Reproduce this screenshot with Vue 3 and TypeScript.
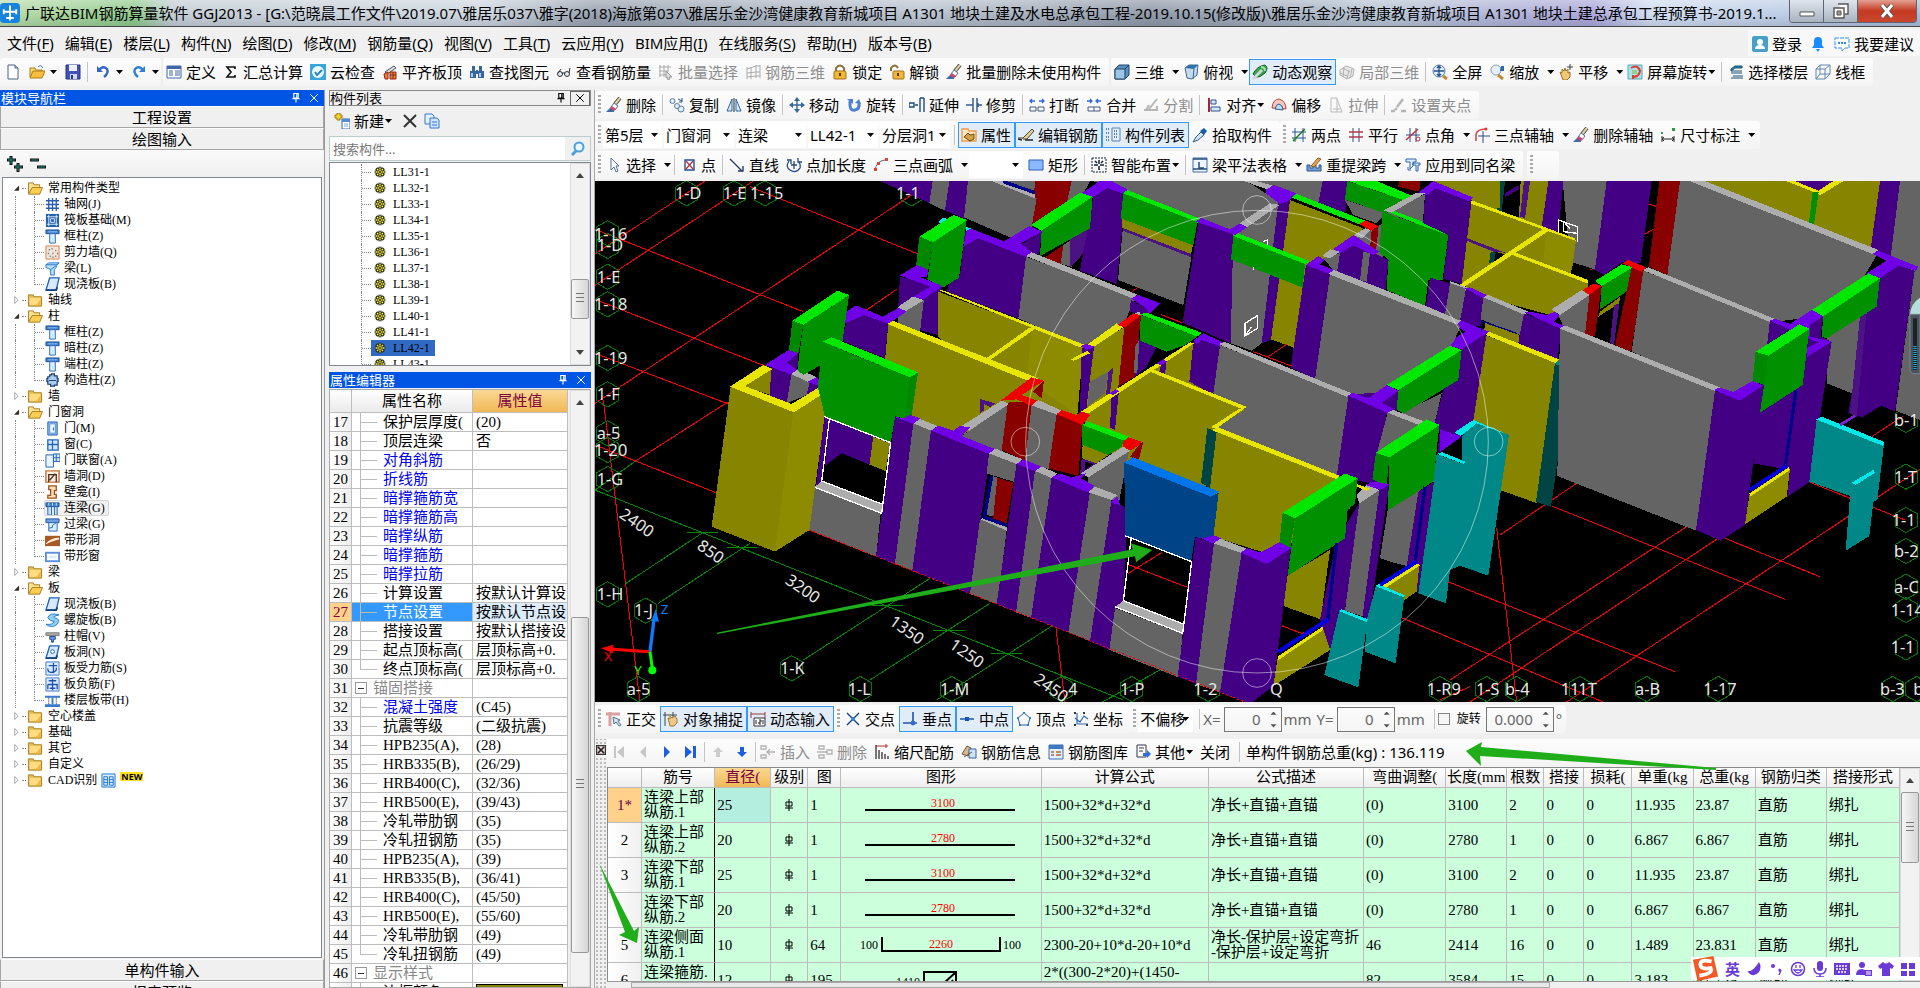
<script setup lang="ts">
import { ref } from 'vue'

const icons: Record<string, string> = {
  app: '<rect x="0" y="0" width="16" height="16" rx="3" fill="#1683dc"/><path d="M8 2v12M3 5v4M13 5v4M3 7h10M5 12h6" fill="none" stroke="#fff" stroke-width="1.5"/>',
  new: '<path d="M3 1h7l3 3v11H3z" fill="#fff" stroke="#48608c"/><path d="M10 1v3h3" fill="#b9cdf0" stroke="#48608c"/>',
  open: '<path d="M1 13V4h5l1 2h6v2" fill="#f7d774" stroke="#a87f1d"/><path d="M1 14l3-7h12l-3 7z" fill="#f9bd3c" stroke="#a87f1d"/><path d="M9 3q3-3 5 1" fill="none" stroke="#3b7acc"/>',
  save: '<path d="M1 1h14v14H1z" fill="#4052b8" stroke="#29357e"/><path d="M4 1h8v6H4z" fill="#eef1fb"/><path d="M5 10h7v5H5z" fill="#cfd6ee"/><path d="M6 11h2v4H6z" fill="#29357e"/>',
  undo: '<path d="M2 2v6h6z" fill="#3564c8"/><path d="M4 6q4-5 8-1 2 4-3 8" fill="none" stroke="#3564c8" stroke-width="2.4"/>',
  redo: '<path d="M14 2v6H8z" fill="#2f7fd8"/><path d="M12 6q-4-5-8-1-2 4 3 8" fill="none" stroke="#2f7fd8" stroke-width="2.4"/>',
  define: '<path d="M1 2h14v12H1z" fill="#fff" stroke="#3f66a8"/><path d="M1 2h14v3H1z" fill="#3f66a8"/><path d="M3 7h4M3 9h4M3 11h4M9 7h5M9 9h5M9 11h5" stroke="#3f66a8"/>',
  sum: '<path d="M12 5V3H4l4 5-4 5h8v-2" fill="none" stroke="#111" stroke-width="1.6"/>',
  cloud: '<path d="M0 0h16v16H0z" fill="#38a6da"/><circle cx="8" cy="8" r="6" fill="#eaf7ff"/><path d="M5 8l2 3 5-5" fill="none" stroke="#2886c0" stroke-width="2"/>',
  roof: '<path d="M3 8l9-6 2 2-9 6z" fill="#fbe3b0" stroke="#2b5792"/><path d="M2 10l4-2v7H3zM8 8h6v7H8z" fill="#d8843b" stroke="#a32014"/><path d="M8 11h6M11 8v7" stroke="#8b2d1d"/>',
  find: '<path d="M3 2h3v5H3zM10 2h3v5h-3zM1 7h6v7H1zM9 7h6v7H9zM7 6h2v4H7z" fill="#39659e"/><path d="M2 9h2v4H2zM10 9h2v4h-2z" fill="#a8caee"/>',
  glasses: '<circle cx="4" cy="10" r="2.500" fill="#dfe9f3" stroke="#333"/><circle cx="11" cy="10" r="2.500" fill="#dfe9f3" stroke="#333"/><path d="M6 9h3M2 9l3-4M13 9l1-5" stroke="#333"/>',
  batch: '<path d="M2 1v12M6 1v12M10 1v7M1 3h12M1 7h9M1 11h7" stroke="#aaa"/><path d="M8 7l6 6h-3l1 2-2 1-1-3-1 1z" fill="#ddd" stroke="#999"/>',
  mesh: '<path d="M2 3v12M6 3v12M11 1v13M15 1v13M2 5l9-3h4M2 9l9-1h4M2 13l9-1h4" fill="none" stroke="#aaa"/>',
  lock: '<path d="M4 7V4q4-5 8 0v3" fill="none" stroke="#887036" stroke-width="2"/><rect x="2" y="7" width="12" height="8" rx="1" fill="#efb637" stroke="#a3731d"/><path d="M8 9v3" stroke="#5b3908" stroke-width="2"/>',
  unlock: '<path d="M2 7V4q4-5 7 0" fill="none" stroke="#887036" stroke-width="2"/><rect x="4" y="7" width="11" height="8" rx="1" fill="#efb637" stroke="#a3731d"/><path d="M9 9v3" stroke="#5b3908" stroke-width="2"/>',
  brush: '<path d="M0 15l5-5 3 2v3z" fill="#3f6da3"/><path d="M14 1L9 7" stroke="#44516b" stroke-width="4"/><path d="M14 1L9 7" stroke="#e9d08a" stroke-width="2"/><path d="M8 6l4 3-3 4-4-3z" fill="#fff" stroke="#56709a"/><path d="M6 9l4 3-2 2-4-3z" fill="#d8456b"/>',
  cube: '<path d="M1 5l4-4h10v10l-4 4H1z" fill="#5c8fbd" stroke="#1f4468"/><path d="M1 5h10v10H1z" fill="#9bc4e6" stroke="#1f4468"/><path d="M11 5l4-4" stroke="#1f4468"/>',
  top: '<path d="M2 4l4-3h9l-1 10-5 4-5-1z" fill="#c5daee" stroke="#416689"/><path d="M2 4l4-3h9l-4 4z" fill="#2c70ad"/><path d="M11 5l-1 10" stroke="#416689"/>',
  orbit: '<path d="M1 10q4-8 12-9 4 3 0 8-5 5-9 4z" fill="#35a447" stroke="#126328"/><path d="M1 15L10 6" stroke="#cfd5d9" stroke-width="3"/><path d="M9 3q4 0 4 4" fill="none" stroke="#9fe0a8" stroke-width="2"/>',
  local: '<path d="M1 6l6-4 8 3-1 7-6 3-7-4zM4 4l7 4M1 9l7 3M8 15l2-9M4 13l1-10M11 14l2-9" fill="#e8e8e8" stroke="#b2b2b2"/>',
  full: '<circle cx="7" cy="7" r="6" fill="#deedff" stroke="#55759c"/><path d="M7 2v10M2 7h10M5 4l2-2 2 2M5 10l2 2 2-2" fill="none" stroke="#244f88" stroke-width="1.3"/><path d="M11 12l4 3" stroke="#bc8b38" stroke-width="3"/>',
  zoom: '<circle cx="7" cy="6" r="5" fill="#e4eef8" stroke="#8aa0b5"/><path d="M12 2h3v5h-4z" fill="#2f66b0"/><path d="M9 11l5 4" stroke="#bc8b38" stroke-width="3"/>',
  pan: '<path d="M2 8l2 1V5l2 2 1-3 1 3 2-2v4l2-1v5l-3 3H5z" fill="#f1c779" stroke="#987026"/><path d="M12 0v6M9 3h6" stroke="#3d3d3d"/>',
  screen: '<path d="M1 1h14v14H1z" fill="#a8e1e7" stroke="#5aa7b8"/><path d="M4 4q7-4 9 3-1 6-7 6M6 11v4" fill="none" stroke="#e33c2c" stroke-width="2"/><path d="M5 6h5v4H5z" fill="#9bd08c"/>',
  floor: '<path d="M3 5l4-3h7v2H7L3 7zM3 9h11M5 12h10M3 14h12M3 7h11" fill="#2b89bc" stroke="#174f72"/>',
  wire: '<path d="M1 5h9v10H1zM5 1h10v9H5zM1 5l4-4M10 5l5-4M10 15l5-5M1 15l4-5" fill="none" stroke="#5f88ad"/>',
  copy: '<circle cx="3.500" cy="4" r="2.500" fill="#e1edf9" stroke="#59799e"/><circle cx="12" cy="12" r="3" fill="#e1edf9" stroke="#59799e"/><circle cx="8" cy="9" r="2.500" fill="#e1edf9" stroke="#59799e"/><path d="M9 2l4 2M13 1v4h-3" fill="none" stroke="#2b4e84"/>',
  mirror: '<path d="M6 2v12H1zM10 2v12h5z" fill="#d2e8ff" stroke="#3164a3"/><path d="M8 1v14" stroke="#222"/>',
  move: '<path d="M8 2v12M2 8h12" stroke="#35669a" stroke-width="1.4"/><path d="M8 0l3 4H5zM8 16l3-4H5zM0 8l4-3v6zM16 8l-4-3v6z" fill="#35669a"/>',
  rotate: '<path d="M4 4v4q0 6 5 5 5-1 4-7" fill="none" stroke="#4d80d0" stroke-width="3"/><path d="M1 2h6v5zM9 6l4-4 2 5z" fill="#4d80d0"/>',
  extend: '<path d="M0 6h5v4H0zM6 8h3M11 1v14M15 1v14M11 1h4" fill="none" stroke="#1f4a7e" stroke-width="1.400"/>',
  trim: '<path d="M0 8h7M7 1v14M11 1v14M12 8h4M12 6v4" fill="none" stroke="#355e8e" stroke-width="1.500"/>',
  break: '<path d="M1 4h5M3 2L1 4l2 2M10 4h5M13 2l2 2-2 2" fill="none" stroke="#2e6ad0" stroke-width="1.3"/><path d="M1 10h6v4H1zM9 10h6v4H9z" fill="none" stroke="#445d80"/>',
  merge: '<path d="M1 4h5M4 2l2 2-2 2M10 4h5M12 2l-2 2 2 2" fill="none" stroke="#2e6ad0" stroke-width="1.3"/><path d="M2 10h12v4H2zM8 10v4" fill="none" stroke="#445d80"/>',
  split: '<path d="M1 13h13V9M6 12l8-10M3 13l3-5" fill="none" stroke="#b6b6b6" stroke-width="2"/>',
  align: '<path d="M3 1v14" stroke="#a6242d" stroke-width="2"/><path d="M5 3h5v4H5zM5 10h9v4H5z" fill="#d7e8fa" stroke="#2b5593"/>',
  offset: '<path d="M1 11q1-9 7-9 7 2 7 10z" fill="#f7c7c2" stroke="#bd4431"/><path d="M4 12q1-5 4-5 4 1 4 6z" fill="#bfdcf3" stroke="#2d6090"/>',
  stretch: '<path d="M3 1h6v14H3zM9 2l5 13h-5M5 12h7" fill="none" stroke="#bbb"/>',
  grip: '<path d="M0 14h4M10 14h5M6 10l6-8M4 13l2-2" stroke="#b5b5b5" stroke-width="2.4"/>',
  props: '<path d="M1 2h6l1 2h7v10H1z" fill="#ffe9c4" stroke="#ee9a4d" stroke-width="1.400"/><path d="M3 10l4-4 2 2 4-1v5l-4 2z" fill="#d1a145" stroke="#6c4b15"/>',
  edit: '<path d="M0 11h5l9-9 2 2-7 8H5" fill="#e9cf8d" stroke="#444"/><path d="M7 13h8M0 12l4 1" fill="none" stroke="#222" stroke-width="1.400"/>',
  list: '<path d="M7 1h8v13H7z" fill="#e2edfb" stroke="#5c82b3"/><path d="M1 2h4M1 6h4M1 10h4M1 13h4M9 4h4M9 7h4M9 10h4" stroke="#385f98" stroke-width="1.4" stroke-dasharray="1 1"/>',
  pick: '<path d="M1 15l3-5 5-5 3 3-6 5z" fill="#cfe6fa" stroke="#345a83"/><path d="M8 4l4-3 3 3-3 4z" fill="#1b5d9f"/>',
  axis2: '<path d="M4 1v14M12 1v14M1 5h14M1 11h14" stroke="#2a5791"/><path d="M2 14L14 2" stroke="#197923" stroke-width="1.5"/><circle cx="4" cy="12" r="1.500" fill="#36963e"/>',
  parallel: '<path d="M5 1v14M11 1v14" stroke="#2b4e84"/><path d="M1 5h14M1 10h14" stroke="#b33a4b" stroke-width="1.5"/>',
  angle: '<path d="M5 1v14M11 1v14M1 8h14" stroke="#2b4e84"/><path d="M1 13L13 2" fill="none" stroke="#c32f38" stroke-width="1.5"/><circle cx="13" cy="12" r="2" fill="none" stroke="#c32f38"/>',
  arcaxis: '<path d="M4 9h12M9 4v12" stroke="#2b4e84"/><path d="M2 14V8q0-6 11-6" fill="none" stroke="#cf3f3f" stroke-width="1.5"/><circle cx="12" cy="2" r="1.5" fill="#cf3f3f"/>',
  dim: '<path d="M2 9v6M14 9v6M2 12h12M4 10l-2 2 2 2M12 10l2 2-2 2" fill="none" stroke="#222"/><path d="M1 5h2v2H1zM12 1h3v3h-3z" fill="#2f9c44"/>',
  cursor: '<path d="M5 1v12l3-3 2 5 2-1-2-5h3z" fill="#fff" stroke="#54729c"/>',
  point: '<path d="M4 3h9v10H4z" fill="#fff" stroke="#275091" stroke-width="1.400"/><path d="M5 4l7 8M12 4l-7 8" stroke="#b42f3c" stroke-width="1.200"/>',
  line: '<path d="M1 2l12 12M9 14h5V9" fill="none" stroke="#253d66" stroke-width="1.4"/>',
  length: '<path d="M3 4Q-1 10 4 13q6 4 10-2 1-4-2-7M1 3h4v4M8 4v8M5 8h6M12 1v4h4" fill="none" stroke="#264a7b" stroke-width="1.3"/>',
  arc: '<path d="M2 14Q3 4 12 3" fill="none" stroke="#5e6384"/><path d="M1 11h3v3H1zM4 5h3v3H4zM12 1h3v3h-3z" fill="#d6463b"/>',
  rect: '<path d="M1 3h14v10H1z" fill="#8bb9ff" stroke="#2d60b5"/>',
  smart: '<path d="M1 1h14v14H1z" fill="none" stroke="#123" stroke-dasharray="2 1"/><path d="M8 3v4M8 9v4M3 8h4M9 8h4M4 4l2 2M12 4l-2 2" stroke="#123" stroke-width="1.5"/>',
  beam: '<path d="M1 1h14v14H1z" fill="#eff6ff" stroke="#3f6aa4"/><path d="M1 2h14M7 5v6h5M1 12h14" stroke="#294d7d" stroke-width="1.500" fill="none"/>',
  span: '<path d="M1 14V8h3v3h3V8h3v3h3V8h2v6z" fill="#6e9ed8" stroke="#315785"/><path d="M5 9l7-8 3 1-7 8z" fill="#e1a65c" stroke="#915821"/>',
  apply: '<path d="M1 2h10v3H8v4l-3 3V5H1zM8 6h7v2h-2v6h-2V8H8z" fill="#dcecff" stroke="#3566a6"/><path d="M3 10v3h3" fill="none" stroke="#3566a6"/>',
  ortho: '<path d="M0 3h14M4 1v14" stroke="#dda0a0" stroke-width="3"/><path d="M7 6l1 7 2-2 3 4 2-1-3-4 2-1z" fill="#cde3f3" stroke="#55738d"/>',
  snap: '<path d="M2 1v14M0 4h14M10 1v6" stroke="#444"/><path d="M5 7l2 1V5l2 2 3-2 2 3v4l-3 3H7z" fill="#efc886" stroke="#a37932"/>',
  dyn: '<path d="M1 1v6M15 1v6M1 3h14" stroke="#953a3a"/><path d="M4 7h11v8H4z" fill="#fff" stroke="#333"/><path d="M6 9v4M9 9h2v2H9v2h2M13 9v4" fill="none" stroke="#222"/>',
  cross: '<path d="M2 2l12 12M14 2L2 14" stroke="#123b87" stroke-width="1.4"/><circle cx="8" cy="8" r="2" fill="#2e83e9"/>',
  perp: '<path d="M11 1v11H1M11 12h4" fill="none" stroke="#2153a6" stroke-width="1.6"/><circle cx="11" cy="12" r="2.4" fill="#2e6dcc"/>',
  mid: '<path d="M1 8h14" stroke="#2153a6" stroke-width="1.5"/><path d="M6 6h4v4H6z" fill="#1652bd"/>',
  vertex: '<path d="M8 2l6 5-2 7H4L2 7z" fill="none" stroke="#265ea8"/><path d="M7 1h2v2H7zM1 6h2v2H1zM3 13h2v2H3zM11 13h2v2h-2zM13 6h2v2h-2z" fill="#3778c9"/>',
  coord: '<path d="M4 2v11h11M2 7l5 4 4-6 4 3" fill="none" stroke="#2d69b8" stroke-width="1.2"/><path d="M1 1h2v2H1zM10 1h2v2h-2zM1 13h2v2H1zM13 13h2v2h-2z" fill="#333"/>',
  first: '<path d="M3 2v12h2V2zM13 2v12L6 8z" fill="#c6c6c6"/>',
  prev: '<path d="M11 2v12L5 8z" fill="#c6c6c6"/>',
  next: '<path d="M5 2v12l6-6z" fill="#1d5ee0"/>',
  last: '<path d="M2 2v12l7-6zM10 2h3v12h-3z" fill="#1d5ee0"/>',
  up: '<path d="M8 3l5 5h-3v5H6V8H3z" fill="#ccc"/>',
  down: '<path d="M8 13l5-5h-3V3H6v5H3z" fill="#1d5ee0"/>',
  insert: '<path d="M1 2h5v3H1zM1 11h5v3H1zM7 8h8M10 5L7 8l3 3" fill="none" stroke="#b2b2b2" stroke-width="1.3"/>',
  remove: '<path d="M2 2h5v3H2zM2 11h5v3H2zM0 8h10M10 6h5v4h-5z" fill="none" stroke="#b2b2b2" stroke-width="1.3"/>',
  scale: '<path d="M2 2h12M12 0v4" stroke="#b53030"/><path d="M2 1v14M5 6v9M8 8v7M11 10v5M14 12v3" stroke="#222" stroke-width="1.2"/>',
  info: '<path d="M1 10l5-8 4 2-3 8z" fill="#d9b989" stroke="#654"/><path d="M8 5h7v9H8z" fill="#cfe3fa" stroke="#3a6399"/><path d="M3 13l8-5" stroke="#654"/>',
  gallery: '<path d="M1 1h14v14H1z" fill="#e2efff" stroke="#3f6dab"/><path d="M1 1h14v4H1z" fill="#3f78c1"/><path d="M3 8h3M3 11h3M8 8h5M8 11h5" stroke="#ad6a34" stroke-width="1.5"/>',
  other: '<path d="M2 1h9v12H2z" fill="#fff" stroke="#335"/><path d="M4 4h5M4 7h4" stroke="#335"/><path d="M8 9h4V6l4 4-4 4v-2H8z" fill="#2c6fdb"/>',
  addlist: '<path d="M3 0h3v2h2v3H6v2H3V5H1V2h2z" fill="#f1d52d" stroke="#9d7b16"/><path d="M8 6h8v10H8z" fill="#fff" stroke="#396bae"/><path d="M8 6h8v3H8z" fill="#5289d1"/><path d="M10 11h4M10 13h4" stroke="#7fa8de"/>',
  del: '<path d="M2 2l12 12M14 2L2 14" stroke="#333" stroke-width="2"/>',
  dup: '<path d="M1 1h7l2 2v8H1z" fill="#e6f1ff" stroke="#3776c6"/><path d="M6 5h7l2 2v8H6z" fill="#cfe4ff" stroke="#3776c6"/><path d="M8 9h5M8 12h5" stroke="#3776c6"/>',
  search: '<circle cx="9" cy="6" r="4.5" fill="#e6f7ff" stroke="#4a9fdc" stroke-width="2"/><path d="M6 10l-4 4" stroke="#4a9fdc" stroke-width="3"/>',
  gear: '<path d="M8 1v14M1 8h14M3 3l10 10M13 3L3 13" stroke="#222" stroke-width="4"/><path d="M8 2v12M2 8h12M4 4l8 8M12 4l-8 8" stroke="#f5ee38" stroke-width="1.800"/><circle cx="8" cy="8" r="3" fill="#f5ee38" stroke="#222"/><circle cx="8" cy="8" r="1.200" fill="#222"/>',
  folder: '<path d="M1 4V2h5l1 2h8v10H1z" fill="#e8bc4e" stroke="#a67a1c"/><path d="M2 5h12v8H2z" fill="#ffdc82"/><path d="M9 13l5-6v6z" fill="#eeb63c"/>',
  folderopen: '<path d="M1 13V2h5l1 2h6v3" fill="#f7e08d" stroke="#a67a1c"/><path d="M1 14l4-7h11l-3 7z" fill="#fbcf55" stroke="#a67a1c"/>',
  grid: '<path d="M4 1v14M8 1v14M12 1v14M1 4h14M1 8h14M1 12h14" stroke="#2b5cae" stroke-width="1.4"/>',
  raft: '<path d="M1 1h14v14H1z" fill="#2460ab"/><path d="M2 4h12M2 12h12M4 2v12M12 2v12" stroke="#d9edff"/><path d="M6 6h4v4H6z" fill="#2460ab" stroke="#d9edff"/>',
  column: '<path d="M1 1h14v4H1z" fill="#3c7cc9" stroke="#204f95"/><path d="M3 3h10" stroke="#8fc0f5"/><path d="M5 5h6v10H5z" fill="#d8ecff" stroke="#2d66bb"/>',
  shear: '<path d="M1 1h14v14H1z" fill="#efe6da" stroke="#dc7d47"/><path d="M4 5h1M8 9h1M11 6h1M5 12h1M11 12h1M3 9h1M13 9h1M7 4h1M8 13h1" stroke="#555" stroke-width="1.500"/>',
  lbeam: '<path d="M1 4l3-2h11l-3 3v2l-2 2v6H6V9L1 7z" fill="#b9dfff" stroke="#2b78c7"/><path d="M1 4h11l3-2M6 9l6-4" stroke="#2b78c7" fill="none"/>',
  slab: '<path d="M5 1h10l-3 13H1z" fill="#d5eaff" stroke="#2361b4" stroke-width="1.400"/><path d="M1 14h11l1-3" stroke="#163f7d" stroke-width="2" fill="none"/>',
  slabhole: '<path d="M5 1h10l-3 13H1z" fill="#d5eaff" stroke="#2361b4" stroke-width="1.400"/><circle cx="8" cy="7" r="2" fill="#fff" stroke="#2361b4"/><path d="M1 14h11l1-3" stroke="#163f7d" stroke-width="2" fill="none"/>',
  ccol: '<path d="M5 2h2V1h3v2h3v3h1v3h-1v4h-3v1H6v-2H3V9H2V6h1V4h2z" fill="#a9ccf3" stroke="#1f3c6d" stroke-width="1.300"/><path d="M4 8h8" stroke="#1f3c6d"/>',
  door: '<path d="M3 1h10v14H3z" fill="#8fbdf2" stroke="#2360b0"/><path d="M5 3h6v10H5z" fill="#e9f5ff" stroke="#5790d8"/><path d="M9 7v3" stroke="#204f95"/>',
  window: '<path d="M3 3h11v11H3zM8 3v11M3 8h11" fill="#d2e9ff" stroke="#2367bb" stroke-width="1.400"/>',
  dwin: '<path d="M1 2h8v13H1z" fill="#eaf4ff" stroke="#2360b0"/><path d="M9 1h7v8H9zM12 1v8M9 5h7" fill="#d2e9ff" stroke="#2360b0"/>',
  hole: '<path d="M1 2h14v12H1z" fill="#fff2df" stroke="#c4703a" stroke-width="1.500"/><path d="M4 14V6h8v8M5 12l6-7" fill="none" stroke="#4b2a1a" stroke-width="1.400"/>',
  niche: '<path d="M4 1h8v5h-2v4h2v4H3v-3h3V5H4z" fill="#ffe0ba" stroke="#9c511d" stroke-width="1.400"/>',
  lintel: '<path d="M1 2h14v4H1z" fill="#3f80cc" stroke="#204f95"/><path d="M4 2v3M8 2v3M12 2v3" stroke="#cfe4ff"/><path d="M3 6h4v9H3zM10 6h3v9h-3z" fill="#c6e1ff" stroke="#2360b0"/>',
  lintel2: '<path d="M1 2h14v4H1z" fill="#6aa2e2" stroke="#204f95"/><path d="M4 6h9v9H4z" fill="#d8ecff" stroke="#2d66bb"/><path d="M4 12l4-1V9l4-3" fill="none" stroke="#2d66bb"/>',
  strip: '<path d="M0 3h16v11H0z" fill="#a65a28"/><path d="M1 11Q6 5 15 5v2Q9 8 1 12z" fill="#ffe9d2"/>',
  swin: '<path d="M0 3h16v11H0z" fill="#5c8fdc"/><path d="M2 5h12v7H2z" fill="#fff"/><path d="M4 7h8v3H4z" fill="#dcebff"/>',
  spiral: '<path d="M15 2Q5-1 3 5q2 4 7 4-2 4-9 3 6 5 12 0 4-6-3-7-3-1 5-3z" fill="#8fd0f7" stroke="#2679c5"/>',
  cap: '<path d="M1 4h14v3H1z" fill="#aaa" stroke="#777"/><path d="M5 8h6v3H9v3H7v-3H5z" fill="#5b9be4" stroke="#2b4d80"/>',
  bar: '<path d="M1 1h14v14H1z" fill="#dcebff" stroke="#3e75c7"/><path d="M4 5h9M9 2v11M3 8q0 5 5 4 5-1 4-5" fill="none" stroke="#1c53a8" stroke-width="1.400"/>',
  negbar: '<path d="M1 1h14v14H1z" fill="#dcebff" stroke="#3e75c7"/><path d="M4 4h8M3 8h10v5M3 8v5M8 2v12M5 12h6" fill="none" stroke="#1c53a8" stroke-width="1.400"/>',
  band: '<path d="M0 3h16v2H0zM0 12h16v3H0z" fill="#3979cf"/><path d="M4 5v7M12 5v7" stroke="#111" stroke-dasharray="1 1"/><path d="M8 5v7" stroke="#3979cf" stroke-width="2"/>',
  cad: '<path d="M1 1h14v14H1z" fill="#d8ebff" stroke="#1e73cb"/><path d="M3 4h4v9H3zM9 4h4v9H9zM3 7h4M3 10h4M9 7h4M9 10h4" fill="none" stroke="#1e73cb"/>',
  user: '<rect x="0" y="0" width="16" height="16" rx="2" fill="#479fcb"/><circle cx="8" cy="6" r="3" fill="#fff"/><path d="M3 13q0-4 5-4t5 4z" fill="#fff"/>',
  bell: '<path d="M2 12l2-3V5q0-4 4-4t4 4v4l2 3zM6 13h4l-2 3z" fill="#1a8aff"/>',
  chat: '<path d="M1 2h14v10H11l-3 3v-3H1z" fill="#fff" stroke="#2c8ff0" stroke-dasharray="4 1"/><path d="M4 7h8" stroke="#2c8ff0" stroke-width="2" stroke-dasharray="2 1"/>',
  pin: '<path d="M5 2h6v6H5zM3 9h10M8 9v5M9 2v6" fill="none" stroke="currentColor" stroke-width="1.500"/>',
  close: '<path d="M3 3l10 10M13 3L3 13" stroke="currentColor" stroke-width="1.300"/>',
  moon: '<path d="M13 1Q6 12 1 10q6 8 12 1 3-5 0-10z" fill="#6a3ad6"/>',
  punct: '<circle cx="5" cy="5" r="2" fill="#6a3ad6"/><path d="M11 8q4 0 0 6 2-3 0-4z" fill="#6a3ad6" stroke="#6a3ad6"/>',
  smile: '<circle cx="8" cy="8" r="6.500" fill="none" stroke="#6a3ad6" stroke-width="1.500"/><path d="M4 9q4 6 8 0zM6 4v3M10 4v3" fill="none" stroke="#6a3ad6" stroke-width="1.300"/>',
  mic: '<rect x="5" y="0" width="6" height="10" rx="3" fill="#6a3ad6"/><path d="M2 7q0 6 6 6t6-6M8 13v3M4 16h8" fill="none" stroke="#6a3ad6" stroke-width="1.500"/>',
  kbd: '<rect x="0" y="2" width="16" height="12" fill="#6a3ad6"/><path d="M2 5h12M2 8h12M4 11h8" stroke="#fff" stroke-width="1.500" stroke-dasharray="2 1"/>',
  person: '<circle cx="6" cy="4" r="3" fill="#6a3ad6"/><path d="M0 14q0-6 6-6l3 1v5zM9 9h7v6H9z" fill="#6a3ad6"/><path d="M10 11h5M10 13h5" stroke="#fff"/>',
  shirt: '<path d="M5 1q3 3 6 0l5 4-2 3-2-1v8H4V7L2 8 0 5z" fill="#6a3ad6"/>',
  apps: '<path d="M1 2h6v6H1zM9 2h6v6H9zM1 10h6v5H1zM9 10h6v5H9z" fill="#6a3ad6"/>',
}

interface Tool { icon?: string; label?: string; off?: boolean; on?: boolean; drop?: boolean; tight?: boolean; sep?: boolean }
const S: Tool = { sep: true }
const t = (icon: string, label: string, extra: Partial<Tool> = {}): Tool => ({ icon, label, ...extra })

const menus: [string, string][] = [['文件', 'F'], ['编辑', 'E'], ['楼层', 'L'], ['构件', 'N'], ['绘图', 'D'], ['修改', 'M'], ['钢筋量', 'Q'], ['视图', 'V'], ['工具', 'T'], ['云应用', 'Y'], ['BIM应用', 'I'], ['在线服务', 'S'], ['帮助', 'H'], ['版本号', 'B']]

const calcTools: Tool[] = [t('define', '定义'), t('sum', '汇总计算'), t('cloud', '云检查'), t('roof', '平齐板顶'), t('find', '查找图元'), t('glasses', '查看钢筋量'), t('batch', '批量选择', { off: true }), t('mesh', '钢筋三维', { off: true }), t('lock', '锁定'), t('unlock', '解锁'), t('brush', '批量删除未使用构件')]
const viewTools: Tool[] = [t('cube', '三维', { drop: true }), t('top', '俯视', { drop: true }), t('orbit', '动态观察', { on: true }), t('local', '局部三维', { off: true }), S, t('full', '全屏'), t('zoom', '缩放', { drop: true }), t('pan', '平移', { drop: true }), t('screen', '屏幕旋转', { drop: true, tight: true }), S, t('floor', '选择楼层'), t('wire', '线框')]
const editTools: Tool[] = [t('brush', '删除'), S, t('copy', '复制'), t('mirror', '镜像'), S, t('move', '移动'), t('rotate', '旋转'), S, t('extend', '延伸'), t('trim', '修剪'), S, t('break', '打断'), t('merge', '合并'), t('split', '分割', { off: true }), S, t('align', '对齐', { drop: true, tight: true }), t('offset', '偏移'), t('stretch', '拉伸', { off: true }), S, t('grip', '设置夹点', { off: true })]
const contextTools: Tool[] = [S, t('props', '属性', { on: true }), t('edit', '编辑钢筋', { on: true }), t('list', '构件列表', { on: true }), t('pick', '拾取构件')]
const axisTools: Tool[] = [t('axis2', '两点'), t('parallel', '平行'), t('angle', '点角', { drop: true }), t('arcaxis', '三点辅轴', { drop: true }), t('brush', '删除辅轴'), t('dim', '尺寸标注', { drop: true })]
const drawTools: Tool[] = [t('cursor', '选择', { drop: true }), S, t('point', '点'), S, t('line', '直线'), t('length', '点加长度'), t('arc', '三点画弧', { drop: true })]
const drawTools2: Tool[] = [t('rect', '矩形'), S, t('smart', '智能布置', { drop: true, tight: true }), S, t('beam', '梁平法表格', { drop: true }), t('span', '重提梁跨', { drop: true }), t('apply', '应用到同名梁')]
const snapA: Tool[] = [t('ortho', '正交'), t('snap', '对象捕捉', { on: true }), t('dyn', '动态输入', { on: true })]
const snapB: Tool[] = [t('cross', '交点'), t('perp', '垂点', { on: true }), t('mid', '中点', { on: true }), t('vertex', '顶点'), t('coord', '坐标')]
const barTools: Tool[] = [t('insert', '插入', { off: true }), t('remove', '删除', { off: true }), t('scale', '缩尺配筋'), t('info', '钢筋信息'), t('gallery', '钢筋图库'), t('other', '其他', { drop: true, tight: true })]
const combos = [['楼层', '第5层'], ['类别', '门窗洞'], ['构件类型', '连梁'], ['构件', 'LL42-1'], ['分层', '分层洞1']]

interface Node { label: string; icon?: string; open?: boolean; sel?: boolean; last?: boolean; isNew?: boolean }
const n = (label: string, icon?: string, extra: Partial<Node> = {}): Node => ({ label, icon, ...extra })
const tree: Node[] = [
  n('常用构件类型', undefined, { open: true }), n('轴网(J)', 'grid'), n('筏板基础(M)', 'raft'), n('框柱(Z)', 'column'), n('剪力墙(Q)', 'shear'), n('梁(L)', 'lbeam'), n('现浇板(B)', 'slab', { last: true }),
  n('轴线'), n('柱', undefined, { open: true }), n('框柱(Z)', 'column'), n('暗柱(Z)', 'column'), n('端柱(Z)', 'column'), n('构造柱(Z)', 'ccol', { last: true }),
  n('墙'), n('门窗洞', undefined, { open: true }), n('门(M)', 'door'), n('窗(C)', 'window'), n('门联窗(A)', 'dwin'), n('墙洞(D)', 'hole'), n('壁龛(I)', 'niche'), n('连梁(G)', 'lintel', { sel: true }), n('过梁(G)', 'lintel2'), n('带形洞', 'strip'), n('带形窗', 'swin', { last: true }),
  n('梁'), n('板', undefined, { open: true }), n('现浇板(B)', 'slab'), n('螺旋板(B)', 'spiral'), n('柱帽(V)', 'cap'), n('板洞(N)', 'slabhole'), n('板受力筋(S)', 'bar'), n('板负筋(F)', 'negbar'), n('楼层板带(H)', 'band', { last: true }),
  n('空心楼盖'), n('基础'), n('其它'), n('自定义'), n('CAD识别', undefined, { isNew: true }),
]
const members = Array.from({ length: 13 }, (_, i) => `LL${31 + i}-1`)
const selected = ref('LL42-1')
const keyword = ref('')

interface Prop { id: number; name: string; value?: string; kind?: 'link' | 'cat' | 'sel' | 'color'; end?: boolean }
const props: Prop[] = [
  { id: 17, name: '保护层厚度(', value: '(20)' }, { id: 18, name: '顶层连梁', value: '否' },
  ...['对角斜筋', '折线筋', '暗撑箍筋宽', '暗撑箍筋高', '暗撑纵筋', '暗撑箍筋', '暗撑拉筋'].map((name, i): Prop => ({ id: 19 + i, name, kind: 'link' })),
  { id: 26, name: '计算设置', value: '按默认计算设' }, { id: 27, name: '节点设置', value: '按默认节点设', kind: 'sel' }, { id: 28, name: '搭接设置', value: '按默认搭接设' },
  { id: 29, name: '起点顶标高(', value: '层顶标高+0.' }, { id: 30, name: '终点顶标高(', value: '层顶标高+0.', end: true },
  { id: 31, name: '锚固搭接', kind: 'cat' }, { id: 32, name: '混凝土强度', value: '(C45)', kind: 'link' }, { id: 33, name: '抗震等级', value: '(二级抗震)' },
  { id: 34, name: 'HPB235(A),', value: '(28)' }, { id: 35, name: 'HRB335(B),', value: '(26/29)' }, { id: 36, name: 'HRB400(C),', value: '(32/36)' }, { id: 37, name: 'HRB500(E),', value: '(39/43)' },
  { id: 38, name: '冷轧带肋钢', value: '(35)' }, { id: 39, name: '冷轧扭钢筋', value: '(35)' }, { id: 40, name: 'HPB235(A),', value: '(39)' }, { id: 41, name: 'HRB335(B),', value: '(36/41)' }, { id: 42, name: 'HRB400(C),', value: '(45/50)' }, { id: 43, name: 'HRB500(E),', value: '(55/60)' },
  { id: 44, name: '冷轧带肋钢', value: '(49)' }, { id: 45, name: '冷轧扭钢筋', value: '(49)', end: true }, { id: 46, name: '显示样式', kind: 'cat' }, { id: 47, name: '边框颜色', kind: 'color' },
]

const cols = [34, 73, 56, 37, 33, 200, 167, 155, 82, 61, 37, 40, 48, 61, 62, 71, 73]
const heads = ['', '筋号', '直径(', '级别', '图', '图形', '计算公式', '公式描述', '弯曲调整(', '长度(mm', '根数', '搭接', '损耗(', '单重(kg', '总重(kg', '钢筋归类', '搭接形式']
const straight = '净长+直锚+直锚'
const bars = [
  ['1*', '连梁上部纵筋.1', '25', '', '1', '3100', '1500+32*d+32*d', straight, '(0)', '3100', '2', '0', '0', '11.935', '23.87', '直筋', '绑扎'],
  ['2', '连梁上部纵筋.2', '20', '', '1', '2780', '1500+32*d+32*d', straight, '(0)', '2780', '1', '0', '0', '6.867', '6.867', '直筋', '绑扎'],
  ['3', '连梁下部纵筋.1', '25', '', '1', '3100', '1500+32*d+32*d', straight, '(0)', '3100', '2', '0', '0', '11.935', '23.87', '直筋', '绑扎'],
  ['', '连梁下部纵筋.2', '20', '', '1', '2780', '1500+32*d+32*d', straight, '(0)', '2780', '1', '0', '0', '6.867', '6.867', '直筋', '绑扎'],
  ['5', '连梁侧面纵筋.1', '10', '', '64', '2260', '2300-20+10*d-20+10*d', '净长-保护层+设定弯折\n-保护层+设定弯折', '46', '2414', '16', '0', '0', '1.489', '23.831', '直筋', '绑扎'],
  ['6', '连梁箍筋.1', '12', '', '195', '1410', '2*((300-2*20)+(1450-\n2*20))+2*(11.9*d)', '', '82', '3584', '15', '0', '0', '3.183', '47.739', '箍筋', '绑扎'],
]

/* Model palette: y/p/g/n/r/c/b are wall faces, upper case the lit top edges. */
const paint: Record<string, string> = {
  y: '#878500', z: '#8d8b00', Y: '#e8e600', p: '#430085', q: '#4c1284', P: '#7000e6', g: '#646464', G: '#adadad', n: '#008800', m: '#009000', N: '#00e800',
  r: '#880000', R: '#ee0000', c: '#008888', C: '#00e8e8', d: '#004444', b: '#004488', B: '#0076ea', k: '#000000',
}
interface Layer { dx: number; faces: string[] }
const layers: Layer[] = [
  { dx: 2580, faces: [
    'g 1345,3 1410,3 1410,280 1320,240', 'y 740,3 1290,3 1262,208', 'p 1290,3 1350,3 1322,232 1262,208', 'p 1035,3 1168,3 1108,38', 'Y 1008,3 1035,3 1105,32 1150,3 1180,3 1112,45', 'm 1088,35 1106,35 1092,133 1077,128',
    'g 690,3 725,3 1285,218 1230,310 1100,410 975,425 650,290', 'G 718,3 765,3 1285,210 1268,222', 'r 628,3 690,3 652,285 597,260', 'p 465,3 605,3 572,250 520,245 462,285 432,268', 'g 338,3 470,3 435,268 360,245', 'p 290,3 340,3 325,160 275,142',
    'y 0,3 295,3 275,142 60,65 0,35', 'd 150,3 165,3 155,97 140,90', 'k 165,3 212,3 207,112 155,97', 'q 222,3 240,3 225,115 210,110', 'p 165,40 205,15 207,28 165,52',
    'y 60,65 290,150 378,180 365,280 415,305 415,335 300,405 100,350 30,310', 'z 290,150 378,180 360,280 280,245', 'k 130,215 165,222 128,250', 'd 122,215 137,218 132,245 117,250', 'q 45,172 165,218 130,215 45,180', 'k 370,248 462,285 430,312 362,282',
    'p 0,35 60,65 35,310 0,300', 'P 0,28 68,56 60,66 0,42',
    'Y 62,60 375,175 378,183 60,70', 'Y 28,314 285,143 303,148 40,322', 'Y 188,215 415,300 412,310 190,226',
    'g 0,315 50,330 40,415 0,408', 'G 0,303 50,322 45,333 0,318', 'p 48,325 105,350 90,440 30,425', 'P 45,325 60,322 110,345 100,355', 'g 100,352 225,402 210,465 92,418', 'G 100,352 115,345 235,395 225,405', 'y 105,425 205,460 208,490 102,462',
    'p 222,400 335,440 322,545 205,488', 'g 325,405 418,345 405,465 340,440', 'G 305,388 395,330 418,345 330,405', 'P 220,395 240,395 290,405 315,395 330,408 310,425 345,438 330,446',
    'r 418,345 455,318 435,468 405,465', 'R 398,330 432,310 455,318 418,345', 'N 435,303 515,253 548,262 455,318', 'm 455,318 548,262 537,330 450,388', 'y 450,395 512,350 505,375 445,410', 'k 442,412 500,375 490,495 435,468', 'q 492,375 508,370 492,495 480,488',
    'r 545,262 582,272 543,515 495,495', 'R 518,250 535,240 588,262 575,276 545,262', 'g 580,272 970,420 940,605 865,640 800,625 545,515', 'G 578,270 595,262 975,417 965,428',
    'g 1130,470 1250,400 1205,640 1130,610', 'p 1288,293 1345,256 1394,272 1335,694 1293,677 1237,712 1195,698 1250,400', 'q 1230,410 1250,395 1220,710 1200,700', 'g 1394,272 1410,278 1410,720 1337,692', 'P 1268,222 1285,212 1405,260 1398,272 1345,257 1288,295 1250,280 1310,242',
    'N 1085,390 1255,280 1290,295 1120,408', 'm 1120,408 1290,295 1280,380 1130,475 1115,470',
    'p 960,420 1020,432 1120,408 1112,470 1145,485 1080,905 1012,950 1020,870 910,850', 'P 960,422 975,416 1020,432 1085,390 1120,408 1080,435 1080,470 1145,485 1072,530 1068,505 1105,488', 'N 917,515 1048,433 1080,447 955,527', 'n 917,515 955,527 942,615 908,602', 'm 955,527 1078,447 1058,615 930,698',
    'p 935,700 1035,635 1005,862 910,850', 'k 910,850 978,870 900,925', 'z 898,945 1020,866 1010,950 885,1033', 'Y 898,940 1016,862 1020,870 900,950',
    'c 1100,718 1302,792 1282,960 1270,965 1258,1068 1187,1112 1200,948 1078,905', 'C 1098,718 1115,710 1304,786 1300,798', 'C 1205,908 1270,870 1275,878 1217,915',
    'p 0,500 105,462 70,722 35,765 0,790', 'P 0,485 45,455 0,425 30,422 118,455 35,505 0,500', 'y 105,465 320,545 262,970 150,930 70,722', 'Y 103,463 118,456 332,540 318,550', 'd 315,548 364,560 303,980 258,966', 'c 325,540 366,552 348,566 315,552',
    'g 330,442 800,630 738,1052 322,888', 'G 328,445 345,436 810,622 797,634', 'p 795,632 870,660 940,615 885,1035 812,1082 738,1050', 'P 792,630 810,622 850,636 908,603 940,616 870,662',
  ] },
  { dx: 1230, faces: [
    'g 0,3 110,3 95,140 30,170 0,160', 'r 105,3 220,3 205,70 95,138', 'r 130,235 190,195 185,255', 'g 215,3 270,3 245,50 200,70', 'g 190,195 215,180 215,260 182,252', 'g 280,3 740,3 835,65 700,160 370,45',
    'g 740,3 970,3 955,70 885,45', 'p 968,3 1045,3 1035,110 955,70', 'g 1035,60 1160,100 1130,130 1060,105', 'N 1045,3 1130,3 1242,50 1222,64', 'm 1042,3 1225,65 1155,100 1035,58', 'r 1197,3 1260,3 1258,35 1195,20', 'g 1160,100 1275,42 1268,135', 'y 1300,3 1500,3 1500,85 1410,60',
    'q 210,130 280,80 270,200 210,262', 'p 280,50 322,20 378,35 350,312 240,272', 'P 240,42 275,20 298,3 335,3 385,30 372,42 322,24 278,52',
    'y 365,112 580,190 572,230 368,150', 'q 368,144 574,222 572,232 368,152', 'g 368,152 574,232 550,375 354,300', 'k 354,300 550,375 545,432 420,385', 'N 368,40 382,30 605,118 592,128', 'm 370,40 592,126 580,196 362,115',
    'p 595,125 700,162 720,180 692,490 548,428', 'g 700,162 835,65 785,490 755,512 692,490', 'p 835,65 870,60 815,480 785,490', 'G 718,130 810,70 838,75 740,142', 'G 730,3 770,3 822,18 808,30', 'P 797,30 822,15 888,40 868,62 840,72 797,40', 'P 588,125 602,113 690,148 720,130 742,142 705,165',
    'y 870,60 1090,145 1070,170 1010,230 925,250 885,505 813,478', 'g 1060,175 1160,125 1150,235 1080,200', 'N 874,52 890,42 1095,122 1080,134', 'R 1078,132 1098,122 1136,138 1112,152', 'r 1115,150 1136,138 1128,212 1110,205', 'G 1062,165 1095,145 1112,150 1085,175', 'N 1150,90 1170,88 1350,156 1340,168', 'm 1148,95 1345,165 1328,300 1285,300 1275,378 1160,330 1165,240 1138,215',
    'p 1345,165 1370,40 1415,60 1385,312 1330,296', 'p 1275,45 1305,10 1410,60 1390,190 1335,160 1270,130', 'P 1255,38 1300,3 1418,52 1408,64 1308,25 1278,46', 'G 1150,92 1250,38 1275,40 1175,98',
    'k 813,478 887,505 875,562 752,513', 'N 700,168 715,160 928,243 915,254', 'm 700,168 915,252 908,323 693,238', 'p 918,255 1000,278 945,600 872,562', 'p 1000,225 1060,190 1166,240 1155,340 1000,285', 'g 970,235 1020,220 1010,282', 'P 1000,207 1060,165 1086,182 1138,215 1120,225 1060,195 1020,220', 'P 918,255 955,228 975,240 960,253 1002,270 988,282', 'G 968,228 990,208 1020,215 990,235', 'g 1090,215 1110,220 1100,305 1080,300',
    'g 990,282 1385,430 1355,500 1165,615 1100,655 1045,640 945,600', 'G 985,282 1002,270 1385,420 1372,434',
    'p 1290,293 1350,310 1335,402 1278,378', 'g 1350,310 1395,325 1380,422 1335,402',
    'g 1200,700 1325,640 1300,745', 'p 1385,508 1460,460 1420,722 1350,770 1300,745 1335,610', 'P 1372,432 1385,422 1466,455 1385,508 1350,495 1405,460', 'N 1160,615 1350,497 1385,510 1195,630', 'm 1195,630 1385,510 1375,600 1212,700 1190,690',
    'p 1040,645 1195,632 1190,692 1160,700 1140,915 1008,890', 'P 1040,645 1058,638 1105,655 1160,615 1197,632 1145,668 1180,686 1165,700', 'g 1163,698 1275,742 1128,830', 'G 1163,698 1180,690 1275,725 1262,737',
  ] },
  { dx: 0, faces: [
    'p 870,3 1030,3 1020,70', 'g 1028,3 1080,3 1065,92 1018,70', 'p 1078,3 1136,3 1122,115 1065,92', 'g 1134,3 1210,3 1340,55 1325,140 1260,172 1122,112', 'G 1205,3 1240,3 1335,42 1335,55',
    'N 1323,135 1470,38 1508,50 1355,152', 'm 1355,152 1508,50 1500,145 1350,228', 'C 1048,122 1060,113 1073,118 1068,128 1048,130', 'C 1125,140 1148,147 1130,157',
    'p 1125,155 1310,228 1285,415 1070,335 1080,300 1110,285', 'p 1290,195 1355,155 1348,222 1310,228', 'P 1120,200 1130,150 1145,147 1242,184 1318,138 1357,155 1292,190 1330,220 1312,232 1165,175', 'g 1308,230 1635,352 1605,425 1480,500 1285,415', 'G 1308,228 1325,217 1640,343 1630,356',
    'P 1622,355 1645,345 1712,370 1680,400 1665,382', 'p 1622,360 1665,382 1680,400 1655,405 1620,395',
    'N 988,170 1090,105 1132,120 1030,186', 'n 988,170 1030,186 1015,270 978,258', 'm 1030,186 1130,121 1107,293 1060,322 1012,298',
    'p 930,290 1055,320 1045,465 990,450 925,380', 'P 930,286 982,255 1015,270 1012,290 992,292 1058,318 1000,358 970,350 1020,320', 'g 925,385 1002,358 990,455 925,430', 'G 922,382 968,350 1002,360 948,393',
    'p 768,430 800,385 895,430 885,535 755,482', 'P 765,430 770,395 798,376 878,410 925,384 950,394 895,432 822,405',
    'y 1045,335 1480,500 1460,705 1240,660 1045,470', 'z 1325,445 1480,500 1462,705 1310,600', 'y 895,432 1340,605 1260,690 1115,765 965,712 885,540', 'Y 1045,330 1062,332 1485,495 1470,502', 'Y 1182,540 1318,443 1335,447 1200,540', 'Y 892,432 910,423 1345,595 1325,607', 'q 1170,657 1215,670 1200,682 1183,672 1183,690 1170,700',
  ] },
  { dx: 1230, faces: [
    'y 250,515 375,440 355,625 250,700', 'p 245,505 282,500 258,695 240,700', 'Y 213,538 262,512 270,520 220,543', 'Y 258,497 350,430 375,438 282,500', 'g 270,605 325,575 315,640 262,680', 'q 325,575 340,562 330,640 318,645', 'P 242,498 260,492 284,500 262,510',
    'r 373,440 423,405 405,590 355,620', 'R 353,435 400,400 425,404 375,442', 'G 403,400 420,394 420,405', 'p 418,478 470,500 440,560 405,590', 'k 468,503 515,520 465,545', 'g 405,500 418,480 412,580 402,580', 'N 420,403 440,398 605,458 592,470', 'm 422,405 592,470 555,495 500,515 420,482',
    'y 250,700 580,487 570,605 735,690 725,770 610,930 400,850 270,790', 'p 485,550 500,540 495,585 478,575', 'p 335,640 357,630 345,750 330,742', 'p 580,487 605,462 668,490 640,645 568,605', 'P 580,482 610,460 672,488 660,498 605,480 590,492',
    'g 660,495 1045,648 1010,890 640,745 735,690 640,640', 'G 655,492 675,486 1055,640 1040,650', 'Y 243,695 570,487 582,490 265,700', 'Y 450,575 465,570 738,680 728,688', 'Y 632,742 715,688 738,682 650,745', 'P 470,550 490,538 502,545 482,556', 'P 328,640 347,628 358,634 340,645',
    'd 622,745 652,755 630,925 603,908', 'y 650,755 1015,893 1050,985 850,1105 800,1120 640,1070 630,925', 'Y 635,750 655,742 1020,888 1010,898',
    'r 420,790 430,785 416,842 390,830', 'R 368,778 380,770 425,785 418,795 390,812 370,800', 'N 248,735 262,724 388,770 372,782', 'm 247,735 372,782 365,800 325,825 245,797', 'y 248,795 325,825 270,865 245,830', 'q 245,835 290,850 270,872 240,885', 'k 255,845 280,852 255,870',
    'g 265,888 388,812 375,870 357,968 265,935', 'G 243,880 370,800 390,812 265,892',
    'c 1385,772 1420,725 1527,765 1465,1187 1380,1157 1350,1170 1338,1270 1255,1240 1310,822 1385,850', 'C 1363,757 1420,720 1527,765 1430,730 1382,768', 'p 1320,748 1385,770 1312,820', 'P 1320,748 1385,770 1320,816', 'C 1312,822 1325,816 1396,845 1392,852',
    'g 1163,990 1260,930 1220,1160 1140,1135', 'p 1255,935 1302,905 1255,1240 1220,1160', 'k 1140,1137 1235,1162 1132,1215', 'y 1135,1225 1258,1155 1250,1235 1210,1262', 'Y 1140,1220 1250,1150 1260,1156 1150,1228',
    'N 1128,818 1280,718 1320,735 1168,832', 'n 1128,818 1168,832 1160,920 1117,898', 'm 1168,832 1318,736 1300,905 1163,992',
    'y 862,1187 990,1110 962,1318 850,1278', 'k 850,1278 962,1318 835,1412', 'z 832,1437 998,1328 990,1410 820,1518', 'Y 832,1430 990,1325 998,1330 835,1440',
    'p 1010,1080 1080,965 1035,1290 990,1410 960,1318', 'g 1078,968 1138,930 1090,1310 1035,1292', 'p 1138,930 1168,915 1105,1335 1088,1305', 'G 1070,945 1100,915 1138,930 1078,970', 'P 1095,915 1125,905 1170,913 1142,930', 'Y 1070,912 1110,925 1100,933 1070,920',
    'N 848,998 1035,880 1073,895 885,1015', 'n 848,998 885,1015 870,1110 838,1090', 'm 885,1015 1073,895 1065,970 1043,990 1035,1075 863,1188',
    'c 1128,1217 1213,1250 1187,1450 1095,1415 1100,1320', 'C 1126,1218 1135,1212 1215,1246 1211,1252', 'c 1018,1290 1102,1322 1075,1522 973,1485', 'C 1017,1293 1025,1288 1104,1318 1100,1326',
  ] },
  { dx: 0, faces: [
    'y 460,618 545,565 540,645', 'p 545,562 605,580 590,672 538,652', 'g 605,580 660,600 650,645 590,670', 'p 660,600 690,600 705,625 650,645', 'z 610,695 715,628 658,1050 555,1115', 'y 422,620 610,695 555,1115 365,1040', 'Y 420,620 520,555 547,567 465,618 605,672 690,620 716,630 612,697',
    'p 575,548 625,520 622,570', 'P 525,555 600,507 627,518 590,548 620,568 605,584', 'G 603,582 625,568 682,592 655,606', 'P 652,606 680,592 710,625',
    'N 607,422 742,332 778,345 640,434', 'n 607,422 640,434 625,520 597,510', 'm 640,434 777,346 765,430 758,482 692,555 640,585 622,570', 'N 698,485 725,472 985,577 960,592', 'm 700,487 960,592 945,715 915,710 902,790 705,710 683,620', 'n 960,592 984,577 965,706 943,718',
    'p 703,710 720,716 697,905 678,920', 'p 718,718 850,770 838,855 755,820 705,857', 'y 850,770 900,790 887,873 838,855', 'k 705,857 755,820 887,873 875,972 695,903', 'G 675,920 695,903 877,972 872,1000', 'g 675,922 872,1000 858,1130 658,1050',
    'p 915,708 970,730 915,1152 858,1130', 'g 970,730 1023,750 967,1172 915,1150', 'p 1023,750 1197,820 1192,880 1172,1018 1140,1242 967,1172',
    'r 1250,668 1330,662 1305,842 1235,810', 'g 1115,768 1253,672 1235,812 1200,808', 'G 1108,742 1235,662 1257,672 1138,752', 'g 1325,675 1405,702 1378,868 1305,842', 'R 1232,662 1325,592 1362,602 1295,645 1342,662 1325,678 1280,658', 'r 1330,635 1362,602 1355,655', 'G 1325,676 1345,660 1415,692 1400,704', 'r 1400,702 1478,728 1465,888 1376,865', 'R 1400,702 1415,690 1458,705 1480,695 1500,705 1478,735',
    'g 1197,820 1282,852 1272,908 1190,880', 'k 1205,885 1270,905 1250,1045 1180,1015', 'r 1222,893 1270,908 1250,1030 1208,1015', 'g 1205,886 1222,893 1210,1010 1190,1005', 'g 1170,1018 1250,1048 1222,1272 1140,1242', 'G 1172,1018 1185,1012 1252,1040 1250,1052',
    'p 1280,850 1335,870 1278,1297 1220,1272', 'g 1335,870 1387,890 1323,1314 1278,1297',
    'P 912,710 940,715 960,705 992,715 970,732', 'G 970,730 990,717 1042,738 1023,752', 'P 1023,752 1045,737 1090,752 1110,738 1142,742 1115,768 1217,808 1197,822', 'G 1197,820 1217,806 1298,838 1280,852', 'P 1280,852 1300,838 1355,860 1335,873', 'G 1335,873 1355,860 1402,880 1385,894',
  ] },
  { dx: 1230, faces: [
    'p 155,892 270,935 205,1357 93,1314', 'g 270,935 335,958 272,1384 205,1357', 'p 335,960 384,985 370,1265 345,1282 328,1410 270,1384', 'P 155,892 180,880 215,893 258,880 243,895 282,917 265,938', 'G 265,937 285,920 352,945 335,960', 'P 333,968 352,950 360,975',
    'k 395,1075 573,1145 550,1332 370,1262', 'g 345,1284 548,1362 535,1492 328,1410', 'G 345,1281 370,1262 552,1332 548,1362',
    'B 372,848 400,832 657,935 632,950', 'b 373,848 632,950 612,1075 585,1072 573,1145 375,1067', 'b 632,950 656,938 640,1072 612,1075',
    'p 587,1070 642,1090 590,1512 533,1490', 'g 642,1090 725,1116 662,1538 588,1512', 'p 725,1116 800,1150 873,1103 820,1518 758,1566 735,1566 660,1538', 'P 587,1068 610,1075 640,1065 665,1076 642,1091', 'G 640,1090 662,1076 740,1106 722,1118', 'P 722,1117 742,1105 780,1118 838,1087 875,1104 800,1152',
  ] },
]
const faces = layers.flatMap((l) => l.faces.map((f) => ({ dx: l.dx, fill: paint[f[0]], points: f.slice(2) })))

const redFloor = 'M15 148L640 395M480 20L985 222M15 358L530 560M15 520L415 672M15 795L378 938M15 222L345 3M15 316L490 3M15 670L965 45M137 843L415 665M740 915L840 850M830 390L920 328M40 660L150 1566M658 1050L1985 1570M1398 1345L1425 1566'
const redRight = 'M150 1065L380 910M305 978L1005 1258M825 1075L1110 1190M-75 1178L675 1475M-260 1265L460 1566M0 1500L710 1040M60 1566L800 1078M350 1566L1410 868M1265 770L1360 708M1080 907L1365 1020M140 1045L200 1566M410 275L430 265M590 70L620 80M580 165L610 148M-510 1335L-420 1365M-30 1560L60 1520'
const greenFloor = 'M15 930L1600 1560M15 930L137 843M290 1057H385M410 1103H500M845 1276H940M1030 1350H1125M1203 1420H1295M105 1212L340 1057M205 1270L480 1090M640 1440L1020 1195M840 1500L1200 1270M1040 1560L1390 1335M1530 1570L1710 1470'
const bubbles: [number, number][] = [[290, 40], [432, 40], [525, 40], [965, 40], [53, 160], [53, 198], [53, 290], [53, 373], [53, 534], [53, 643], [53, 760], [53, 810], [53, 897], [53, 1243], [167, 1292], [605, 1465], [811, 1527], [1085, 1527], [1415, 1527], [145, 1527], [1625, 1527], [1855, 1527], [2550, 1527], [2690, 1527], [2780, 1527], [2970, 1527], [3170, 1527], [3385, 1527], [3908, 1527], [3980, 1527], [3948, 720], [3948, 890], [3948, 1020], [3948, 1113], [3948, 1220], [3948, 1290], [3948, 1402]]
const hex = (x: number, y: number) => [[0, -38], [33, -19], [33, 19], [0, 38], [-33, 19], [-33, -19]].map(([a, b]) => `${x + a},${y + b}`).join(' ')
const marks: [number, number, string][] = [[255, 58, '1-D'], [398, 58, '1-E'], [480, 58, '1-15'], [918, 58, '1-1'], [12, 180, '1-16'], [20, 213, '1-D'], [20, 308, '1-E'], [12, 390, '1-18'], [12, 551, '1-19'], [20, 660, '1-F'], [20, 778, 'a-5'], [12, 828, '1-20'], [20, 914, '1-G'], [20, 1260, '1-H'], [132, 1308, '1-J'], [570, 1482, '1-K'], [773, 1544, '1-L'], [1050, 1544, '1-M'], [110, 1544, 'a-5'], [1435, 1544, '4'], [1590, 1544, '1-P'], [1810, 1544, '1-2'], [2040, 1544, 'Q'], [2510, 1544, '1-R9'], [2658, 1544, '1-S'], [2745, 1544, 'b-4'], [2912, 1544, '11'], [2965, 1544, '1T'], [3135, 1544, 'a-B'], [3340, 1544, '1-17'], [3870, 1544, 'b-3'], [3970, 1544, 'b'], [3912, 738, 'b-1'], [3912, 908, '1-T'], [3905, 1038, '1-1'], [3912, 1130, 'b-2'], [3912, 1240, 'a-C'], [3902, 1308, '1-14'], [3902, 1420, '1-1']]
const dims: [number, number, string][] = [[85, 1010, '2400'], [318, 1105, '850'], [583, 1208, '3200'], [895, 1332, '1350'], [1075, 1402, '1250'], [1328, 1505, '2450']]
</script>

<template>
  <div class="app">
    <header class="title">
      <svg class="logo" viewBox="0 0 16 16" v-html="icons.app" />
      <h1>广联达BIM钢筋算量软件 GGJ2013 - [G:\范晓晨工作文件\2019.07\雅居乐037\雅字(2018)海旅第037\雅居乐金沙湾健康教育新城项目 A1301 地块土建及水电总承包工程-2019.10.15(修改版)\雅居乐金沙湾健康教育新城项目 A1301 地块土建总承包工程预算书-2019.1...</h1>
      <div class="wins">
        <button aria-label="最小化"><svg viewBox="0 0 16 16"><path d="M1 9h14v4H1z" fill="#fff" stroke="#555" /></svg></button>
        <button aria-label="还原"><svg viewBox="0 0 16 16"><path d="M5 1h10v10h-3M1 5h10v10H1z" fill="#fff" stroke="#555" stroke-width="1.4" /><path d="M4 8h4v4H4z" fill="#999" stroke="#555" /></svg></button>
        <button class="x" aria-label="关闭窗口"><svg viewBox="0 0 16 16"><path d="M3 2l10 12M13 2L3 14" stroke="#555" stroke-width="5" /><path d="M3 2l10 12M13 2L3 14" stroke="#fff" stroke-width="3" /></svg></button>
      </div>
    </header>

    <nav class="menu">
      <button v-for="m in menus" :key="m[0]">{{ m[0] }}(<u>{{ m[1] }}</u>)</button>
      <div class="account">
        <button><svg class="ic" viewBox="0 0 16 16" v-html="icons.user" />登录</button>
        <button aria-label="通知"><svg class="ic" viewBox="0 0 16 16" v-html="icons.bell" /></button>
        <button><svg class="ic" viewBox="0 0 16 16" v-html="icons.chat" />我要建议</button>
      </div>
    </nav>

    <div class="bar main">
      <div class="group files">
        <button class="sq" aria-label="新建工程"><svg class="ic" viewBox="0 0 16 16" v-html="icons.new" /></button>
        <button class="sq" aria-label="打开"><svg class="ic" viewBox="0 0 16 16" v-html="icons.open" /><i class="dd" /></button>
        <button class="sq" aria-label="保存"><svg class="ic" viewBox="0 0 16 16" v-html="icons.save" /></button>
        <span class="sep" />
        <button class="sq" aria-label="撤销"><svg class="ic" viewBox="0 0 16 16" v-html="icons.undo" /><i class="dd" /></button>
        <button class="sq" aria-label="重做"><svg class="ic" viewBox="0 0 16 16" v-html="icons.redo" /><i class="dd" /></button>
      </div>
      <div v-for="(g, gi) in [calcTools, viewTools]" :key="gi" class="group">
        <template v-for="(b, i) in g" :key="i">
          <span v-if="b.sep" class="sep" />
          <button v-else class="tool" :class="{ on: b.on, tight: b.tight }" :disabled="b.off"><svg class="ic" viewBox="0 0 16 16" v-html="icons[b.icon!]" />{{ b.label }}<i v-if="b.drop" class="dd" /></button>
        </template>
      </div>
    </div>

    <div class="body">
      <aside class="nav">
        <div class="cap blue"><span>模块导航栏</span><svg viewBox="0 0 16 16" v-html="icons.pin" /><button aria-label="关闭导航栏"><svg viewBox="0 0 16 16" v-html="icons.close" /></button></div>
        <button class="stack">工程设置</button>
        <button class="stack">绘图输入</button>
        <div class="expand">
          <button aria-label="全部展开"><svg viewBox="0 0 16 16"><path d="M4 0v9M0 4h9M11 7v9M7 11h9" stroke="#111" stroke-width="3" /><path d="M4 1v7M1 4h7M11 8v7M8 11h7" stroke="#1a8f7c" stroke-width="1" /></svg></button>
          <button aria-label="全部折叠"><svg viewBox="0 0 16 16"><path d="M0 4h9M7 11h9" stroke="#111" stroke-width="3" /><path d="M1 4h7M8 11h7" stroke="#1a8f7c" stroke-width="1" /></svg></button>
        </div>
        <ul class="tree">
          <li v-for="(r, i) in tree" :key="i" :class="{ leaf: r.icon, last: r.last }">
            <template v-if="r.icon">
              <span class="g1" /><span class="g2" />
              <span class="node" :class="{ sel: r.sel }"><svg viewBox="0 0 16 16" v-html="icons[r.icon]" />{{ r.label }}</span>
            </template>
            <template v-else>
              <svg class="tw" viewBox="0 0 8 8"><path v-if="r.open" d="M7 1v6H1z" fill="#333" /><path v-else d="M2 0l4 4-4 4z" fill="#fff" stroke="#999" /></svg>
              <span class="dots" />
              <svg class="fo" viewBox="0 0 16 16" v-html="icons[r.open ? 'folderopen' : 'folder']" />{{ r.label }}
              <template v-if="r.isNew"><svg class="cad" viewBox="0 0 16 16" v-html="icons.cad" /><b class="new">NEW</b></template>
            </template>
          </li>
        </ul>
        <div class="foot"><button class="stack">单构件输入</button><button class="stack">报表预览</button></div>
      </aside>

      <aside class="side">
        <section class="members">
          <div class="cap"><span>构件列表</span><svg viewBox="0 0 16 16" v-html="icons.pin" /><button class="boxed" aria-label="关闭构件列表"><svg viewBox="0 0 16 16" v-html="icons.close" /></button></div>
          <div class="mtools">
            <button class="tool tight"><svg class="ic" viewBox="0 0 16 16" v-html="icons.addlist" />新建<i class="dd" /></button>
            <button aria-label="删除构件"><svg class="ic" viewBox="0 0 16 16" v-html="icons.del" /></button>
            <button aria-label="复制构件"><svg class="ic" viewBox="0 0 16 16" v-html="icons.dup" /></button>
          </div>
          <div class="search"><input v-model="keyword" type="text" aria-label="搜索构件" placeholder="搜索构件..." /><button aria-label="搜索"><svg class="ic" viewBox="0 0 16 16" v-html="icons.search" /></button></div>
          <div class="mlist">
            <ul>
              <li v-for="m in members" :key="m"><span class="g2" /><button :class="{ cur: m === selected }" @click="selected = m"><svg viewBox="0 0 16 16" v-html="icons.gear" />{{ m }}</button></li>
            </ul>
            <div class="sb"><i class="au" /><span class="thumb t1" /><i class="ad" /></div>
          </div>
        </section>
        <section class="editor">
          <div class="cap blue"><span>属性编辑器</span><svg viewBox="0 0 16 16" v-html="icons.pin" /><button aria-label="关闭属性编辑器"><svg viewBox="0 0 16 16" v-html="icons.close" /></button></div>
          <div class="pwrap">
            <table class="ptable">
              <colgroup><col class="c1" /><col class="c2" /><col class="c3" /></colgroup>
              <thead><tr><th /><th>属性名称</th><th class="hot">属性值</th></tr></thead>
              <tbody>
                <tr v-for="p in props" :key="p.id" :class="p.kind">
                  <th scope="row">{{ p.id === 47 ? '' : p.id }}</th>
                  <td><div class="pn"><i v-if="p.kind === 'cat'" class="minus" /><i v-else class="br" :class="{ end: p.end }" />{{ p.name }}</div></td>
                  <td><div v-if="p.kind === 'color'" class="swatch" /><template v-else>{{ p.value }}</template></td>
                </tr>
              </tbody>
            </table>
            <div class="sb"><i class="au" /><span class="thumb t2" /></div>
          </div>
        </section>
      </aside>

      <main>
        <div class="bar">
          <div class="group"><span class="grip" />
            <template v-for="(b, i) in editTools" :key="i"><span v-if="b.sep" class="sep" /><button v-else class="tool" :class="{ tight: b.tight }" :disabled="b.off"><svg class="ic" viewBox="0 0 16 16" v-html="icons[b.icon!]" />{{ b.label }}<i v-if="b.drop" class="dd" /></button></template>
          </div>
        </div>
        <div class="bar">
          <div class="group"><span class="grip" />
            <span v-for="(c, i) in combos" :key="c[0]" class="combo" :class="{ short: i === 0 }"><select :aria-label="c[0]"><option>{{ c[1] }}</option></select><i class="dd" /></span>
            <template v-for="(b, i) in contextTools" :key="i"><span v-if="b.sep" class="sep" /><button v-else class="tool" :class="{ on: b.on }"><svg class="ic" viewBox="0 0 16 16" v-html="icons[b.icon!]" />{{ b.label }}</button></template>
          </div>
          <div class="group"><span class="grip" />
            <button v-for="b in axisTools" :key="b.label" class="tool"><svg class="ic" viewBox="0 0 16 16" v-html="icons[b.icon!]" />{{ b.label }}<i v-if="b.drop" class="dd" /></button>
          </div>
        </div>
        <div class="bar">
          <div class="group"><span class="grip" />
            <template v-for="(b, i) in drawTools" :key="i"><span v-if="b.sep" class="sep" /><button v-else class="tool"><svg class="ic" viewBox="0 0 16 16" v-html="icons[b.icon!]" />{{ b.label }}<i v-if="b.drop" class="dd" /></button></template>
            <span class="combo narrow"><select aria-label="画弧方式"><option /></select><i class="dd" /></span>
            <template v-for="(b, i) in drawTools2" :key="i"><span v-if="b.sep" class="sep" /><button v-else class="tool" :class="{ tight: b.tight }"><svg class="ic" viewBox="0 0 16 16" v-html="icons[b.icon!]" />{{ b.label }}<i v-if="b.drop" class="dd" /></button></template>
          </div>
          <div class="group stub"><span class="grip" /></div>
        </div>

        <div class="view">
          <svg viewBox="15 3 3975 1563" preserveAspectRatio="xMidYMid slice" role="img" aria-label="三维模型">
            <g fill="none" stroke-width="3" shape-rendering="crispEdges">
              <path :d="redFloor" stroke="#f00" />
              <path :d="redRight" stroke="#f00" transform="translate(2580 0)" />
              <path :d="greenFloor" stroke="#008a00" />
              <polygon v-for="(b, i) in bubbles" :key="i" :points="hex(b[0], b[1])" stroke="#007a00" />
            </g>
            <g shape-rendering="crispEdges">
              <polygon v-for="(f, i) in faces" :key="i" :points="f.points" :fill="f.fill" :transform="`translate(${f.dx} 0)`" />
            </g>
            <g fill="none" shape-rendering="crispEdges">
              <path d="M1205 888L1183 1012L1252 1037M1240 5L1335 38M2240 1090L2213 1320M2505 920L2475 1150M3618 632L3585 865" stroke="#000088" stroke-width="10" />
              <path d="M2065 1415L2215 1318M2370 1215L2480 1145M3480 930L3590 858" stroke="#0000e0" stroke-width="12" />
              <path d="M2680 425L2780 460M2675 420v35" stroke="#000088" stroke-width="4" />
              <path d="M703 710L902 788L875 1000L675 922M718 718L695 903L875 972" stroke="#fff" stroke-width="4" />
              <path d="M1605 1067L1805 1145L1778 1360L1575 1280M1623 1078L1600 1262L1780 1332" stroke="#fff" stroke-width="4" />
              <path d="M1965 430L2002 407V445L1965 468ZM1965 468L1985 440M2020 185L2032 180V195M1990 262V270" stroke="#fff" stroke-width="4" />
              <path d="M2905 158V120L2962 140V185M2920 125V155L2962 160M2925 130L2940 145" stroke="#fff" stroke-width="4" />
              <path d="M1618 1155L1795 1223M1615 1180L1715 1118M1990 515L2105 558M2035 530L2090 493M1625 335L1645 322M1712 403L1775 428M2075 1337L2140 1362" stroke="#f00" stroke-width="3" />
              <path d="M658 1050L1965 1566" stroke="#f00" stroke-width="3" stroke-dasharray="6 6" />
              <path d="M3750 735L3795 707" stroke="#7a20d8" stroke-width="8" />
            </g>
            <g fill="none" stroke="#fff" stroke-opacity=".5" stroke-width="3">
              <circle cx="2001" cy="785" r="694" /><circle cx="2001" cy="90" r="43" /><circle cx="1306" cy="785" r="43" /><circle cx="2696" cy="785" r="43" /><circle cx="2001" cy="1479" r="43" />
            </g>
            <g class="marks">
              <text v-for="(m, i) in marks" :key="i" :x="m[0]" :y="m[1]">{{ m[2] }}</text>
              <text v-for="d in dims" :key="d[2]" :transform="`translate(${d[0]} ${d[1]}) rotate(35)`">{{ d[2] }}</text>
            </g>
            <path d="M180 1415L192 1318" stroke="#0a7cff" stroke-width="10" /><path d="M197 1288L207 1325L184 1322z" fill="#0a7cff" />
            <path d="M178 1415L68 1408" stroke="#f00" stroke-width="9" /><path d="M33 1405L70 1394V1420z" fill="#f00" />
            <path d="M180 1415L187 1465" stroke="#0f0" stroke-width="9" /><circle cx="187" cy="1471" r="12" fill="#0f0" />
            <g class="axes"><text x="43" y="1443" fill="#f00">X</text><text x="133" y="1484" fill="#0f0">Y</text><text x="212" y="1301" fill="#0a7cff">Z</text></g>
            <polygon points="380,1358 1628,1108 1622,1090 1687,1110 1638,1147 1635,1129 382,1362" fill="#1fae1a" />
            <g transform="translate(2580 0)">
              <path d="M1380 403Q1382 370 1412 352V403z" fill="#b5dfdd" /><path d="M1380 403h30v178h-22l-8-8z" fill="#4a545c" stroke="#78848c" stroke-width="3" /><path d="M1389 415h12v155h-12z" fill="#1c2226" /><path d="M1395 498v70" stroke="#23a6e0" stroke-width="10" stroke-dasharray="3 3" />
            </g>
          </svg>
        </div>

        <div class="bar snapbar">
          <div class="group"><span class="grip" />
            <button v-for="b in snapA" :key="b.label" class="tool" :class="{ on: b.on }"><svg class="ic" viewBox="0 0 16 16" v-html="icons[b.icon!]" />{{ b.label }}</button>
            <span class="grip" />
            <button v-for="b in snapB" :key="b.label" class="tool" :class="{ on: b.on }"><svg class="ic" viewBox="0 0 16 16" v-html="icons[b.icon!]" />{{ b.label }}</button>
          </div>
          <div class="group nums"><span class="grip" />
            <span class="combo offs"><select aria-label="偏移方式"><option>不偏移</option></select><i class="dd" /></span>
            <span class="sep" />
            <label>X=<span class="num"><input type="text" value="0" disabled /><i class="sp" /></span>mm</label>
            <label>Y=<span class="num"><input type="text" value="0" disabled /><i class="sp" /></span>mm</label>
            <span class="sep" />
            <label class="rot"><input type="checkbox" />旋转</label>
            <span class="num wide"><input type="text" value="0.000" aria-label="旋转角度" disabled /><i class="sp" /></span>°
          </div>
        </div>

        <section class="rebar">
          <div class="rail"><button aria-label="关闭钢筋编辑"><svg viewBox="0 0 16 16"><path d="M1 1h14v14H1z" fill="#f4dede" stroke="#333" stroke-width="2" /><path d="M3 3l10 10M13 3L3 13" stroke="#222" stroke-width="2.400" /></svg></button></div>
          <div class="rmain">
            <div class="rtools">
              <button v-for="(k, i) in ['first', 'prev', 'next', 'last']" :key="k" class="step" :disabled="i < 2" :aria-label="['首行', '上一行', '下一行', '末行'][i]"><svg class="ic" viewBox="0 0 16 16" v-html="icons[k]" /></button>
              <span class="sep" />
              <button class="step" disabled aria-label="上移"><svg class="ic" viewBox="0 0 16 16" v-html="icons.up" /></button>
              <button class="step" aria-label="下移"><svg class="ic" viewBox="0 0 16 16" v-html="icons.down" /></button>
              <span class="sep" />
              <button v-for="b in barTools" :key="b.label" class="tool" :class="{ tight: b.tight }" :disabled="b.off"><svg class="ic" viewBox="0 0 16 16" v-html="icons[b.icon!]" />{{ b.label }}<i v-if="b.drop" class="dd" /></button>
              <button class="txt">关闭</button>
              <span class="sep" />
              <span class="total">单构件钢筋总重(kg) : 136.119</span>
            </div>
            <div class="gridwrap">
              <div class="clip">
                <table class="grid">
                  <colgroup><col v-for="(w, i) in cols" :key="i" :style="{ width: w + 'px' }" /></colgroup>
                  <thead><tr><th v-for="(h, i) in heads" :key="i" :class="{ hot: i === 2 }">{{ h }}</th></tr></thead>
                  <tbody>
                    <tr v-for="(r, ri) in bars" :key="ri">
                      <template v-for="(c, ci) in r" :key="ci">
                        <th v-if="ci === 0" scope="row" :class="{ act: ri === 0 }">{{ c }}</th>
                        <td v-else-if="ci === 3" class="mid"><svg class="phi" viewBox="0 0 10 12"><path d="M5 0v12M2 3h6v4H2zM1 9h8" fill="none" stroke="#000" /></svg></td>
                        <td v-else-if="ci === 5" class="mid">
                          <svg class="shape" viewBox="0 0 180 34">
                            <template v-if="ri < 4"><path d="M14 22h150" stroke="#000" stroke-width="2" /><text x="92" y="19" class="rd">{{ c }}</text></template>
                            <template v-else-if="ri === 4"><path d="M31 9v14h118V9" fill="none" stroke="#000" stroke-width="2" /><text x="90" y="20" class="rd">2260</text><text x="18" y="21">100</text><text x="161" y="21">100</text></template>
                            <template v-else><path d="M73 34V9h32v25M105 9L93 20M102 17l-10 13" fill="none" stroke="#000" stroke-width="2" /><text x="57" y="23">{{ c }}</text></template>
                          </svg>
                        </td>
                        <td v-else :class="{ cell: ri === 0 && ci === 2, edge: ci === 1, lines: ci === 6 || ci === 7 }">{{ c }}</td>
                      </template>
                    </tr>
                  </tbody>
                </table>
              </div>
              <div class="sb"><i class="au" /><span class="thumb t3" /></div>
            </div>
            <div class="hs"><span /></div>
          </div>
          <svg class="notes" viewBox="0 0 1325 249" preserveAspectRatio="xMinYMin meet" aria-hidden="true">
            <polygon points="871,12 887,3 886,8 1121,29 1121,31 885,17 886,27" fill="#1fae1a" />
            <polygon points="4,124 39,192 44,188 42,204 24,196 30,193" fill="#1fae1a" />
          </svg>
          <div class="ime">
            <svg class="sg" viewBox="0 0 30 28"><path d="M2 4L24 0l5 22-22 5z" fill="#f15a24" /><path d="M22 6Q10 3 10 9t11 4q3 6-12 8" fill="none" stroke="#fff" stroke-width="4" /></svg>
            <b>英</b>
            <svg v-for="k in ['moon', 'punct', 'smile', 'mic', 'kbd', 'person', 'shirt', 'apps']" :key="k" viewBox="0 0 16 16" v-html="icons[k]" />
          </div>
        </section>
      </main>
    </div>
  </div>
</template>

<style>
body { margin: 0; background: #f0f0f0; }
</style>

<style scoped>
.app { height: 100vh; overflow: hidden; display: flex; flex-direction: column; background: #f0f0f0; color: #000; font: 15px/20px "Noto Sans", "Noto Sans CJK SC", sans-serif; }
.app * { box-sizing: border-box; }
button, select, input { font: inherit; color: inherit; margin: 0; padding: 0; border: 0; background: none; border-radius: 0; }
button { display: inline-flex; align-items: center; white-space: nowrap; }
ul { list-style: none; margin: 0; padding: 0; }
svg { display: block; flex: none; }
.ic { width: 16px; height: 16px; }

.title { height: 27px; flex: none; display: flex; align-items: center; padding-left: 0; border-bottom: 1px solid #444; background: linear-gradient(to bottom, rgba(255,255,255,.35), rgba(255,255,255,0) 60%, rgba(60,70,90,.15)), linear-gradient(to right, #b9dca9 0, #8dc98a 7%, #c3ccd4 9%, #cdd6df 25%, #96a0ae 31%, #b9c3cf 48%, #8d97a6 60%, #b6c3d3 72%, #a9a6d8 83%, #cfdcf0 86%, #a9bcd8 100%); }
.logo { width: 20px; height: 22px; margin-right: 5px; }
h1 { flex: 1; min-width: 0; margin: 0; font: inherit; white-space: nowrap; overflow: hidden; text-overflow: clip; }
.wins { display: flex; align-self: flex-start; margin-right: 3px; border: 1px solid #5b6573; border-top: 0; border-radius: 0 0 4px 4px; overflow: hidden; }
.wins button { width: 34px; height: 22px; justify-content: center; background: linear-gradient(#dfe5ec, #a9b3c0); border-right: 1px solid #5b6573; }
.wins svg { width: 16px; height: 16px; }
.wins .x { width: 58px; border: 0; background: linear-gradient(#e2a092, #c53a22 50%, #c9472e); }

.menu { height: 31px; flex: none; display: flex; align-items: center; gap: 11px; padding-left: 7px; }
.menu u { text-underline-offset: 2px; }
.account { margin-left: auto; display: flex; align-items: center; gap: 8px; padding: 4px 6px 2px 4px; background: #f8f8f8; }
.account button { gap: 4px; }

.bar { display: flex; align-items: center; height: 30px; flex: none; }
.bar.main { gap: 2px; height: 28px; margin-bottom: 4px; }
.group { display: flex; align-items: center; height: 28px; padding-right: 4px; background: linear-gradient(#fdfdfd, #f4f4f4); border-radius: 3px; }
.files { width: 161px; padding-left: 1px; }
.sq { gap: 4px; padding: 0 4px; }
.tool { height: 26px; padding: 0 3px 0 2px; gap: 4px; border: 1px solid transparent; }
.tool:disabled { color: #8d8d8d; }
.tool.on { border-color: #3399ff; background: #e1ecf9; }
.dd { width: 7px; height: 4px; margin-left: 1px; background: #000; clip-path: polygon(0 0, 100% 0, 50% 100%); }
.tool .dd { margin-left: 4px; margin-right: -3px; }
.tool.tight .dd { margin-left: -3px; margin-right: 0; }
.sep { width: 1px; height: 20px; margin: 0 3px 0 2px; background: #c4c4c4; flex: none; }
.grip { width: 3px; height: 20px; margin: 0 2px 0 3px; flex: none; background: repeating-linear-gradient(#a9a9a9 0 2px, transparent 2px 4px); }
.combo { position: relative; display: inline-flex; align-items: center; width: 70px; height: 26px; margin-right: 2px; background: #fff; }
.combo.short { width: 59px; }
.combo select { width: 100%; height: 100%; padding-left: 2px; appearance: none; color: #000; }
.combo .dd { position: absolute; right: 4px; pointer-events: none; }
.combo.narrow { width: 54px; }
.combo.offs { width: 55px; }
.stub { width: 32px; margin-left: 4px; }

.body { flex: 1; min-height: 0; display: flex; }
.cap { display: flex; align-items: center; height: 16px; flex: none; font-size: 13px; line-height: 15px; border: 1px solid #888; padding-left: 0; }
.cap span { flex: 1; }
.cap svg { width: 12px; height: 12px; margin: 0 3px; }
.cap.blue { background: #0055e5; color: #fff; border-color: #0055e5; }
.boxed { border: 1px solid #666; height: 15px; }

.nav { width: 325px; flex: none; display: flex; flex-direction: column; border-right: 1px solid #999; }
.stack { flex: none; width: 100%; height: 22px; justify-content: center; border: 1px solid #a5a5a5; border-top-color: #fff; background: #f0f0f0; }
.expand { display: flex; align-items: center; gap: 7px; height: 27px; flex: none; padding-left: 7px; background: linear-gradient(#fafafa, #eee); }
.expand svg { width: 16px; height: 16px; }
.tree { flex: 1; min-height: 0; overflow: hidden; margin: 0 2px; padding-top: 2px; border: 1px solid #828790; background: #fff; font: 12px/16px "Liberation Serif", "Noto Sans CJK SC", serif; }
.tree li { display: flex; align-items: center; height: 16px; white-space: nowrap; }
.tw { width: 7px; height: 8px; margin-left: 10px; }
.dots { width: 4px; margin: 0 1px 0 2px; border-top: 1px dotted #888; }
.fo { width: 16px; height: 15px; margin-right: 5px; }
.g1 { width: 19px; height: 16px; margin-left: 12px; border-left: 1px dotted #888; }
.g2 { position: relative; width: 10px; height: 16px; border-left: 1px dotted #888; }
.g2::after { content: ""; position: absolute; left: 0; top: 8px; width: 9px; border-top: 1px dotted #888; }
.last .g2 { height: 9px; align-self: flex-start; }
.node { display: flex; align-items: center; gap: 4px; height: 16px; padding: 0 4px 0 1px; }
.node svg { width: 15px; height: 15px; }
.node.sel { background: #f1f1f1; outline: 1px solid #d4d4d4; outline-offset: -1px; border-radius: 2px; }
.cad { width: 15px; height: 15px; margin-left: 4px; }
.new { align-self: flex-start; margin-left: 4px; padding: 0 1px; background: #ffe11a; font: bold 9px/9px "Noto Sans", sans-serif; }
.foot { height: 30px; flex: none; overflow: hidden; padding-top: 1px; }

.side { width: 270px; flex: none; display: flex; flex-direction: column; padding: 0 3px 0 4px; border-right: 1px solid #aaa; }
.members { height: 276px; flex: none; display: flex; flex-direction: column; }
.mtools { height: 30px; flex: none; display: flex; align-items: center; gap: 6px; padding-left: 2px; }
.search { display: flex; height: 25px; flex: none; border: 1px solid #bcc; background: #fff; }
.search input { flex: 1; min-width: 0; padding-left: 3px; font-size: 13px; }
.search input::placeholder { color: #777; opacity: 1; }
.search button { width: 25px; justify-content: center; background: #f0f0f0; }
.mlist { flex: 1; min-height: 0; display: flex; overflow: hidden; margin-top: 1px; border: 1px solid #828790; background: #fff; font: 12px/16px "Liberation Serif", "Noto Sans CJK SC", serif; }
.mlist ul { flex: 1; padding: 1px 0 0 31px; }
.mlist li { display: flex; height: 16px; }
.mlist button { gap: 7px; padding: 0 5px 0 3px; }
.mlist button svg { width: 12px; height: 12px; }
.mlist .cur { background: #316ac5; }
.sb { width: 20px; flex: none; position: relative; display: flex; flex-direction: column; background: #f2f2f2; border: 1px solid #ddd; }
.thumb { width: 18px; border: 1px solid #999; border-radius: 2px; background: repeating-linear-gradient(#777 0 1px, transparent 1px 4px) center / 8px 12px no-repeat, linear-gradient(to right, #f6f6f6, #d6d6d6); }
.au, .ad { width: 8px; height: 5px; margin: 9px 5px; background: #444; clip-path: polygon(50% 0, 100% 100%, 0 100%); flex: none; }
.ad { margin-top: auto; clip-path: polygon(0 0, 100% 0, 50% 100%); }
.t1 { height: 40px; margin-top: 92px; }
.t2 { height: 336px; margin-top: 203px; }
.t3 { height: 71px; }
.editor { flex: 1; min-height: 0; display: flex; flex-direction: column; margin-top: 6px; }
.pwrap { flex: 1; min-height: 0; display: flex; justify-content: space-between; overflow: hidden; border: 1px solid #aaa; margin-top: 1px; }
.ptable { width: 238px; table-layout: fixed; border-spacing: 0; align-self: flex-start; background: #fff; font: 15px/17px "Liberation Serif", "Noto Sans CJK SC", serif; }
.c1 { width: 22px; }
.c2 { width: 121px; }
.ptable th, .ptable td { height: 19px; padding: 0; border: solid #bdbdbd; border-width: 0 1px 1px 0; font-weight: normal; text-align: left; white-space: nowrap; overflow: hidden; }
.ptable thead th { height: 23px; text-align: center; background: linear-gradient(#fff, #eaeaea); }
.ptable tbody th { background: linear-gradient(to right, #fff, #eee); text-align: center; }
.ptable td:last-child { padding-left: 3px; }
.ptable thead .hot, .grid thead .hot { background: linear-gradient(#fbd894, #f0b855); color: #7a0040; }
.pn { display: flex; align-items: center; height: 18px; gap: 6px; padding-left: 8px; }
.br { position: relative; width: 17px; height: 18px; flex: none; border-left: 1px solid #bbb; }
.br::after { content: ""; position: absolute; top: 9px; left: 0; right: 0; border-top: 1px solid #bbb; }
.br.end { height: 10px; align-self: flex-start; }
.minus { width: 12px; height: 12px; margin-left: -5px; border: 1px solid #999; background: linear-gradient(#333, #333) center / 6px 1px no-repeat; }
.link .pn { color: #0000f0; }
.cat .pn { color: #888; }
.sel td { background: #3399ff; color: #fff; }
.sel td:last-child { background: #dcecfb; color: #000; }
.ptable .sel th { background: #ffd18b; color: #7a0040; }
.swatch { height: 17px; margin-right: 4px; border: 1px solid #000; background: #868400; }

main { flex: 1; min-width: 0; display: flex; flex-direction: column; }
.view { flex: 1; min-height: 0; background: #000; overflow: hidden; margin-top: 1px; }
.view > svg { width: 100%; height: 100%; }
.marks text { font: 49px "Noto Sans", sans-serif; fill: #e8e8e8; }
.axes text { font: 40px "Noto Sans", sans-serif; }
.snapbar { height: 37px; padding-bottom: 3px; color: #000; }
.nums { color: #666; gap: 0; }
.nums .grip { margin-left: 2px; }
.nums .sep { margin-left: 4px; }
.nums label { display: inline-flex; align-items: center; margin-right: 5px; }
.num { position: relative; display: inline-flex; width: 58px; height: 25px; margin: 0 2px 0 3px; border: 1px solid #777; }
.num.wide { width: 68px; }
.num input { width: 100%; padding-right: 20px; text-align: right; }
.sp { position: absolute; right: 4px; top: 4px; width: 6px; height: 16px; background: #555; clip-path: polygon(50% 0, 100% 20%, 0 20%, 0 80%, 50% 100%, 100% 80%, 0 80%, 0 20%); }
.nums .rot { margin-right: 2px; color: #000; font-size: 12px; gap: 7px; }
.rot input { appearance: none; width: 12px; height: 12px; border: 1px solid #888; background: #f6f6f6; }

.rebar { position: relative; display: flex; height: 249px; flex: none; }
.rail { width: 12px; flex: none; background: radial-gradient(circle, #bbb 1px, transparent 1px) 0 14px / 4px 4px; }
.rail button { width: 10px; height: 11px; margin: 1px; background: #f0f0f0; }
.rail svg { width: 10px; height: 10px; }
.rmain { flex: 1; min-width: 0; display: flex; flex-direction: column; }
.rtools { display: flex; align-items: center; height: 28px; flex: none; padding-bottom: 2px; background: linear-gradient(#fdfdfd, #f3f3f3); }
.step { width: 23px; justify-content: center; margin-right: 1px; }
.rtools .sep { margin-left: 1px; margin-right: 1px; }
.txt { margin: 0 8px 0 3px; }
.total { margin-left: 5px; }
.gridwrap { flex: 1; min-height: 0; display: flex; border-top: 1px solid #888; border-left: 1px solid #888; }
.clip { flex: 1; min-width: 0; overflow: hidden; }
.grid { width: 100%; table-layout: fixed; border-spacing: 0; font: 15px/15px "Liberation Serif", "Noto Sans CJK SC", serif; }
.grid th, .grid td { height: 35px; padding: 0 2px; border: solid #bcbcbc; border-width: 0 1px 1px 0; font-weight: normal; text-align: left; word-break: break-all; overflow: hidden; background: #ccffdc; }
.grid thead th { height: 20px; padding: 0; text-align: center; white-space: nowrap; background: linear-gradient(#fff, #eee); }
.grid tbody th { padding: 0; text-align: center; background: linear-gradient(to right, #fff, #f0f0f0); }
.grid tbody .act { background: #ffd18b; color: #60003c; }
.grid .lines { white-space: pre; }
.grid .cell { background: #b4eedf; }
.grid .edge { border-right-color: #000; }
.grid .mid { padding: 0; }
.mid svg { margin: 0 auto; }
.phi { width: 10px; height: 12px; }
.shape { width: 180px; height: 34px; }
.shape text { font: 12px "Liberation Serif", serif; text-anchor: middle; }
.shape .rd { fill: #f00; }
.hs { height: 7px; flex: none; border-top: 1px solid #999; background: #f0f0f0; }
.hs span { display: block; width: 70%; height: 6px; margin-left: 24px; border: 1px solid #aaa; background: #e8e8e8; }
.notes { position: absolute; left: 0; top: 0; width: 1325px; height: 249px; pointer-events: none; }
.ime { position: absolute; right: 0; bottom: 8px; display: flex; align-items: center; gap: 6px; height: 23px; padding-right: 4px; background: #fff; color: #6a3ad6; }
.ime svg { width: 16px; height: 16px; }
.ime .sg { width: 28px; height: 28px; }
</style>
